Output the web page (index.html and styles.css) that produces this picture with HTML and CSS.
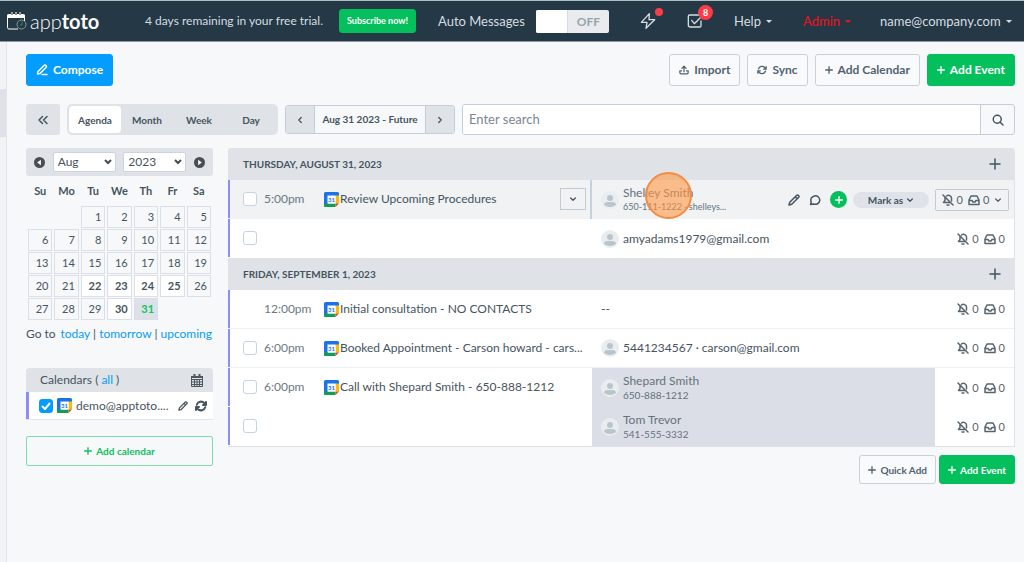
FILE: index.html
```
<!DOCTYPE html>
<html lang="en">
<head>
	<meta charset="UTF-8">
	<meta name="viewport" content="width=device-width, initial-scale=1">
	<title>Apptoto - Agenda</title>
	<link rel="stylesheet" href="styles.css">
</head>
<body>
	<svg class="sprite" width="0" height="0" aria-hidden="true">
		<symbol id="i-pencil" viewBox="0 0 24 24"><path d="M17 3a2.8 2.8 0 0 1 4 4L7.500 20.500 2 22l1.500-5.500zM14.500 5.500l4 4"/></symbol>
		<symbol id="i-edit" viewBox="0 0 24 24"><path d="M12 21h10M16 3a2.800 2.800 0 0 1 4 4L8 19l-5 1 1-5z"/></symbol>
		<symbol id="i-upload" viewBox="0 0 24 24"><path d="M6 14H2v4a3 3 0 0 0 3 3h14a3 3 0 0 0 3-3v-4h-4M12 16V3M7 8l5-5 5 5"/></symbol>
		<symbol id="i-sync" viewBox="0 0 24 24"><path d="M22 4v6h-6M2 20v-6h6M3.500 9.500A9 9 0 0 1 18.500 6L22 10M2 14l3.500 4a9 9 0 0 0 15-3.500"/></symbol>
		<symbol id="i-plus" viewBox="0 0 24 24"><path d="M12 2v20M2 12h20"/></symbol>
		<symbol id="i-down" viewBox="0 0 24 24"><path d="M5 9l7 7 7-7"/></symbol>
		<symbol id="i-left" viewBox="0 0 24 24"><path d="M15 6l-6 6 6 6"/></symbol>
		<symbol id="i-right" viewBox="0 0 24 24"><path d="M9 6l6 6-6 6"/></symbol>
		<symbol id="i-lefts" viewBox="0 0 24 24"><path d="M11 5l-7 7 7 7M20 5l-7 7 7 7"/></symbol>
		<symbol id="i-search" viewBox="0 0 24 24"><circle cx="10.500" cy="10.500" r="8"/><path d="M16 16l6 6"/></symbol>
		<symbol id="i-bolt" viewBox="0 0 24 24"><path d="M14 1L2 14h8.500L9 23l13-13h-8.500z"/></symbol>
		<symbol id="i-check" viewBox="0 0 24 24"><path d="M21 12v7a2 2 0 0 1-2 2H5a3 3 0 0 1-3-3V5a2 2 0 0 1 2-2h15M7 11l4 5L21 6"/></symbol>
		<symbol id="i-chat" viewBox="0 0 24 24"><path d="M3 21l1.500-5A9 8.500 0 1 1 9 20z"/></symbol>
		<symbol id="i-bell" viewBox="0 0 24 24"><path d="M2 2l20 20M6 7v6l-3 4h14M9 4c4-3 10 0 10 4v6M10 22h4"/></symbol>
		<symbol id="i-inbox" viewBox="0 0 24 24"><path d="M2 12l4-8h12l4 8v9H2zM2 13h6l2 3h4l2-3h6"/></symbol>
		<symbol id="i-user" viewBox="0 0 18 18"><circle cx="9" cy="9" r="9" fill="#e9edf0"/><circle cx="9" cy="7" r="3" fill="#b9c5cc"/><path fill="#b9c5cc" d="M3 14q0-3 4-3h4q4 0 4 3-6 4-12 0z"/></symbol>
		<symbol id="i-gcal" viewBox="0 0 15 15">
			<path fill="#1a73e8" d="M1.500 0h12A1.500 1.500 0 0 1 15 1.500V4H4v11H1.500A1.500 1.500 0 0 1 0 13.500v-12A1.500 1.500 0 0 1 1.500 0z"/>
			<path fill="#fbbc04" d="M11.500 3.500H15v8h-3.500z"/>
			<path fill="#0f9d58" d="M3.500 11.500h8V15H1.500A1.500 1.500 0 0 1 0 13.500v-2z"/>
			<path fill="#ea4335" d="M11.500 11.500H15L11.500 15z"/>
			<path fill="#fff" d="M3.500 3.500h8v8h-8z"/>
			<text x="7.500" y="10" text-anchor="middle" font-size="6" font-weight="700" fill="#1a73e8">31</text>
		</symbol>
	</svg>

	<header class="topbar">
		<a class="logo" href="#">
			<svg width="20" height="18" viewBox="0 0 20 18" aria-hidden="true">
				<path d="M.5 6V15.500a1.500 1.500 0 0 0 1.500 1.500h9" fill="none" stroke="#fff"/>
				<path d="M0 6V3.500A1.500 1.500 0 0 1 1.500 2h15A1.500 1.500 0 0 1 18 3.500V6z" fill="#fff"/>
				<path d="M5 1v2M9 1v2M13 1v2" stroke="#243845" stroke-width="2"/>
				<path d="M5 0v3M9 0v3M13 0v3" stroke="#fff"/>
				<path d="M17.500 6v3" stroke="#fff"/>
				<circle cx="14.500" cy="12.500" r="4.500" fill="#243845" stroke="#7fa095"/>
				<path d="M15 9.500v3.500h-2" fill="none" stroke="#2c8a6b"/>
			</svg>
			<span>app<b>toto</b></span>
		</a>
		<span class="trial">4 days remaining in your free trial.</span>
		<button class="btn green subscribe">Subscribe now!</button>
		<label for="auto">Auto Messages</label>
		<span class="switch"><input type="checkbox" id="auto" role="switch"><span>OFF</span></span>
		<a class="notice" href="#" aria-label="Activity"><svg class="icon i15"><use href="#i-bolt"/></svg><i class="dot"></i></a>
		<a class="notice" href="#" aria-label="Tasks"><svg class="icon i15"><use href="#i-check"/></svg><i class="count">8</i></a>
		<a class="menu" href="#">Help</a>
		<a class="menu admin" href="#">Admin</a>
		<a class="menu" href="#">name@company.com</a>
	</header>

	<div class="page">
		<div class="rail"><i></i></div>
		<main>
			<div class="actions">
				<button class="btn blue"><svg class="icon i12"><use href="#i-edit"/></svg>Compose</button>
				<span class="grow"></span>
				<button class="btn"><svg class="icon i10"><use href="#i-upload"/></svg>Import</button>
				<button class="btn"><svg class="icon i10"><use href="#i-sync"/></svg>Sync</button>
				<button class="btn"><svg class="icon i8"><use href="#i-plus"/></svg>Add Calendar</button>
				<button class="btn green"><svg class="icon i8"><use href="#i-plus"/></svg>Add Event</button>
			</div>

			<div class="filters">
				<button class="collapse" aria-label="Collapse"><svg class="icon i12"><use href="#i-lefts"/></svg></button>
				<div class="tabs">
					<button class="active">Agenda</button>
					<button>Month</button>
					<button>Week</button>
					<button>Day</button>
				</div>
				<div class="range">
					<button aria-label="Previous"><svg class="icon i10"><use href="#i-left"/></svg></button>
					<span>Aug 31 2023 - Future</span>
					<button aria-label="Next"><svg class="icon i10"><use href="#i-right"/></svg></button>
				</div>
				<div class="search">
					<input type="text" placeholder="Enter search" aria-label="Enter search">
					<button aria-label="Search"><svg class="icon i12"><use href="#i-search"/></svg></button>
				</div>
			</div>

			<div class="columns">
				<aside>
					<div class="monthnav">
						<button aria-label="Previous month"><svg width="11" height="11" viewBox="0 0 12 12"><circle cx="6" cy="6" r="6" fill="#4a4e54"/><path d="M7.500 3v6L3.500 6z" fill="#fff"/></svg></button>
						<select aria-label="Month"><option>Aug</option></select>
						<select aria-label="Year"><option>2023</option></select>
						<button aria-label="Next month"><svg width="11" height="11" viewBox="0 0 12 12"><circle cx="6" cy="6" r="6" fill="#4a4e54"/><path d="M4.500 3v6l4-3z" fill="#fff"/></svg></button>
					</div>
					<table class="month">
						<thead>
							<tr><th>Su</th><th>Mo</th><th>Tu</th><th>We</th><th>Th</th><th>Fr</th><th>Sa</th></tr>
						</thead>
						<tbody>
							<tr><td class="none"></td><td class="none"></td><td>1</td><td>2</td><td>3</td><td>4</td><td>5</td></tr>
							<tr><td>6</td><td>7</td><td>8</td><td>9</td><td>10</td><td>11</td><td>12</td></tr>
							<tr><td>13</td><td>14</td><td>15</td><td>16</td><td>17</td><td>18</td><td>19</td></tr>
							<tr><td>20</td><td>21</td><td class="busy">22</td><td class="busy">23</td><td class="busy">24</td><td class="busy">25</td><td>26</td></tr>
							<tr><td>27</td><td>28</td><td>29</td><td class="busy">30</td><td class="today">31</td><td class="none"></td><td class="none"></td></tr>
						</tbody>
					</table>
					<p class="goto">Go to <span><a href="#">today</a> | <a href="#">tomorrow</a> | <a href="#">upcoming</a></span></p>

					<section class="calendars">
						<h2><span>Calendars ( <a href="#">all</a> )</span>
							<svg width="12" height="13" viewBox="0 0 12 13" aria-hidden="true"><path fill="none" stroke="#4c5860" d="M.5 2.500h11v10H.5zM.5 5.500h11M.5 8h11M.5 10.500h11M3.500 5v7M6 5v7M8.500 5v7"/><path stroke="#4c5860" stroke-width="2" d="M3.500 0v3M8.500 0v3M0 3h12"/></svg>
						</h2>
						<div class="calendar">
							<input type="checkbox" id="demo" checked>
							<svg class="gcal"><use href="#i-gcal"/></svg>
							<label for="demo">demo@apptoto....</label>
							<button aria-label="Edit"><svg class="icon i10"><use href="#i-pencil"/></svg></button>
							<button aria-label="Refresh"><svg class="icon i12 bold"><use href="#i-sync"/></svg></button>
						</div>
					</section>
					<button class="addcal"><svg class="icon i8"><use href="#i-plus"/></svg>Add calendar</button>
				</aside>

				<section class="agenda">
					<div class="list">
						<h2>Thursday, August 31, 2023 <button aria-label="Add event"><svg class="icon i12"><use href="#i-plus"/></svg></button></h2>
						<div class="row hover">
							<div class="event">
								<input type="checkbox" aria-label="Select Shelley Smith">
								<time>5:00pm</time>
								<svg class="gcal"><use href="#i-gcal"/></svg>
								<span class="title">Review Upcoming Procedures</span>
								<button class="more" aria-label="Event menu"><svg class="icon i8"><use href="#i-down"/></svg></button>
							</div>
							<div class="contact">
								<svg class="avatar"><use href="#i-user"/></svg>
								<div class="person">Shelley Smith<small>650-111-1222 · shelleys...</small></div>
								<div class="tools">
									<button aria-label="Edit contact"><svg class="icon i12"><use href="#i-pencil"/></svg></button>
									<button aria-label="Message"><svg class="icon i12"><use href="#i-chat"/></svg></button>
									<button class="round" aria-label="Add"><svg class="icon i8"><use href="#i-plus"/></svg></button>
									<button class="mark">Mark as <svg class="icon i8"><use href="#i-down"/></svg></button>
								</div>
								<i class="pointer"></i>
							</div>
							<button class="status boxed"><svg class="icon i12"><use href="#i-bell"/></svg>0 <svg class="icon i12"><use href="#i-inbox"/></svg>0 <svg class="icon i8"><use href="#i-down"/></svg></button>
						</div>
						<div class="row">
							<div class="event"><input type="checkbox" aria-label="Select amyadams1979@gmail.com"></div>
							<div class="contact"><svg class="avatar"><use href="#i-user"/></svg><div class="single">amyadams1979@gmail.com</div></div>
							<div class="status"><svg class="icon i12"><use href="#i-bell"/></svg>0 <svg class="icon i12"><use href="#i-inbox"/></svg>0</div>
						</div>

						<h2>Friday, September 1, 2023 <button aria-label="Add event"><svg class="icon i12"><use href="#i-plus"/></svg></button></h2>
						<div class="row lined">
							<div class="event nocheck">
								<time>12:00pm</time>
								<svg class="gcal"><use href="#i-gcal"/></svg>
								<span class="title">Initial consultation - NO CONTACTS</span>
							</div>
							<div class="contact">--</div>
							<div class="status"><svg class="icon i12"><use href="#i-bell"/></svg>0 <svg class="icon i12"><use href="#i-inbox"/></svg>0</div>
						</div>
						<div class="row lined">
							<div class="event">
								<input type="checkbox" aria-label="Select 5441234567">
								<time>6:00pm</time>
								<svg class="gcal"><use href="#i-gcal"/></svg>
								<span class="title">Booked Appointment - Carson howard - cars...</span>
							</div>
							<div class="contact"><svg class="avatar"><use href="#i-user"/></svg><div class="single">5441234567 · carson@gmail.com</div></div>
							<div class="status"><svg class="icon i12"><use href="#i-bell"/></svg>0 <svg class="icon i12"><use href="#i-inbox"/></svg>0</div>
						</div>
						<div class="row">
							<div class="event">
								<input type="checkbox" aria-label="Select Shepard Smith">
								<time>6:00pm</time>
								<svg class="gcal"><use href="#i-gcal"/></svg>
								<span class="title">Call with Shepard Smith - 650-888-1212</span>
							</div>
							<div class="contact shaded"><svg class="avatar"><use href="#i-user"/></svg><div class="person">Shepard Smith<small>650-888-1212</small></div></div>
							<div class="status"><svg class="icon i12"><use href="#i-bell"/></svg>0 <svg class="icon i12"><use href="#i-inbox"/></svg>0</div>
						</div>
						<div class="row">
							<div class="event"><input type="checkbox" aria-label="Select Tom Trevor"></div>
							<div class="contact shaded"><svg class="avatar"><use href="#i-user"/></svg><div class="person">Tom Trevor<small>541-555-3332</small></div></div>
							<div class="status"><svg class="icon i12"><use href="#i-bell"/></svg>0 <svg class="icon i12"><use href="#i-inbox"/></svg>0</div>
						</div>
					</div>
					<div class="bottom">
						<button class="btn small"><svg class="icon i8"><use href="#i-plus"/></svg>Quick Add</button>
						<button class="btn small green"><svg class="icon i8"><use href="#i-plus"/></svg>Add Event</button>
					</div>
				</section>
			</div>
		</main>
	</div>
</body>
</html>
```
FILE: styles.css
```
*{
	box-sizing: border-box;
}
body{
	margin: 0;
	min-height: 100vh;
	display: flex;
	flex-direction: column;
	background: #f6f8fa;
	color: #46545e;
	font: 12px/16px Lato, "Open Sans", sans-serif;
}
button, input, select{
	font: inherit;
	color: inherit;
	margin: 0;
	padding: 0;
}
button{
	border: 0;
	background: none;
	display: flex;
	align-items: center;
	justify-content: center;
	white-space: nowrap;
	cursor: pointer;
}
a{
	color: #0a9bf5;
	text-decoration: none;
}
.sprite{
	display: none;
}

/* icons */
.icon{
	flex: none;
	fill: none;
	stroke: currentColor;
	stroke-width: 2;
	stroke-linecap: round;
	stroke-linejoin: round;
}
.i8{
	width: 8px;
	height: 8px;
	stroke-width: 4;
}
.i10{
	width: 10px;
	height: 10px;
	stroke-width: 3;
}
.i12{
	width: 12px;
	height: 12px;
	stroke-width: 3;
}
.i15{
	width: 16px;
	height: 16px;
}
.bold{
	stroke-width: 4;
}
.gcal{
	flex: none;
	width: 15px;
	height: 15px;
}
.avatar{
	flex: none;
	width: 18px;
	height: 18px;
}

/* top bar */
.topbar{
	display: grid;
	grid-template-columns: 138px 194px 99px 98px 104px 47px 47px 69px 77px 1fr;
	align-items: center;
	justify-items: start;
	height: 42px;
	padding-left: 7px;
	border-top: 1px solid #a9bfc2;
	border-bottom: 1px solid #8b99a2;
	background: #243845;
	color: #d5dde2;
	white-space: nowrap;
}
.topbar > label, .menu{
	font-size: 13px;
}
.logo{
	display: flex;
	align-items: center;
	gap: 3px;
	color: #fff;
	font-size: 20px;
	font-weight: 300;
	line-height: 24px;
}
.logo b{
	font-weight: 700;
}
.topbar .subscribe{
	height: 24px;
	padding: 0 7px;
	font-size: 9px;
}
.switch{
	display: flex;
	width: 73px;
	height: 23px;
	border-radius: 2px;
	background: #e9ebee;
	overflow: hidden;
}
.switch input{
	appearance: none;
	width: 32px;
	background: #fff;
	border-right: 1px solid #cfdaea;
}
.switch span{
	flex: 1;
	text-align: center;
	line-height: 23px;
	font-weight: 700;
	color: #97a3ab;
}
.notice{
	position: relative;
	display: flex;
	color: #d5dde2;
}
.dot, .count{
	position: absolute;
	border-radius: 50%;
	background: #fd3b46;
}
.dot{
	right: -7px;
	top: -5px;
	width: 8px;
	height: 8px;
}
.count{
	left: 11px;
	top: -8px;
	width: 15px;
	height: 15px;
	color: #fff;
	font: 700 9px/15px Lato, sans-serif;
	text-align: center;
}
.menu{
	display: flex;
	align-items: center;
	gap: 5px;
	color: #d5dde2;
}
.menu::after{
	content: "";
	border: 3px solid transparent;
	border-top-color: currentColor;
	border-bottom: 0;
}
.menu.admin{
	color: #f5101c;
}

/* page */
.page{
	flex: 1;
	display: flex;
}
.rail{
	width: 7px;
	padding-top: 47px;
	border-right: 1px solid #e1e5e9;
	background: #f2f3f5;
}
.rail i{
	display: block;
	height: 48px;
	background: #dee2e8;
}
main{
	flex: 1;
	min-width: 0;
	padding: 12px 9px 12px 19px;
}
.grow{
	flex: 1;
}
.actions{
	display: flex;
	gap: 7px;
	margin-bottom: 18px;
}
.btn{
	height: 32px;
	gap: 5px;
	padding: 0 9px;
	border: 1px solid #c9d0d7;
	border-radius: 3px;
	background: #f9fafc;
	color: #506370;
	font-weight: 700;
}
.btn.blue{
	border-color: #049dfe;
	background: #049dfe;
	color: #fff;
}
.btn.green{
	border-color: #04c05c;
	background: #04c05c;
	color: #fff;
}
.btn.small{
	height: 29px;
	padding: 0 8px;
	gap: 4px;
	font-size: 10px;
}

/* filters */
.filters{
	display: flex;
	gap: 7px;
	height: 31px;
	margin-bottom: 13px;
	font-size: 10px;
	font-weight: 700;
}
.collapse{
	width: 34px;
	border-radius: 3px;
	background: #dfe3e8;
}
.tabs{
	display: grid;
	grid-template-columns: repeat(4, 52px);
	padding: 2px 1px 2px 2px;
	border-radius: 5px;
	background: #dfe3e8;
}
.tabs .active{
	border-radius: 4px;
	background: #fff;
}
.range{
	display: flex;
	width: 170px;
	height: 29px;
	margin-top: 1px;
	border: 1px solid #c3cedb;
	border-radius: 3px;
	overflow: hidden;
}
.range button{
	width: 28px;
	background: #dfe3e8;
}
.range span{
	flex: 1;
	border: solid #c3cedb;
	border-width: 0 1px;
	line-height: 27px;
	text-align: center;
}
.search{
	flex: 1;
	display: flex;
	border: 1px solid #c3cedb;
	border-radius: 3px;
	overflow: hidden;
}
.search input{
	flex: 1;
	min-width: 0;
	padding: 0 6px 2px;
	border: 0;
	border-right: 1px solid #c3cedb;
	background: #fff;
	font-size: 13px;
	font-weight: 400;
}
.search input::placeholder{
	color: #7b8791;
}
.search button{
	width: 33px;
}

/* sidebar */
.columns{
	display: grid;
	grid-template-columns: 187px minmax(0, 1fr);
	gap: 15px;
	align-items: start;
}
.monthnav{
	display: flex;
	align-items: center;
	justify-content: space-between;
	height: 28px;
	padding: 0 8px;
	border-radius: 3px;
	background: #dfe3e8;
}
.monthnav select{
	appearance: none;
	width: 63px;
	height: 20px;
	padding-left: 4px;
	border: 1px solid #c9d3e2;
	border-radius: 2px;
	background: #fff url("data:image/svg+xml,%3Csvg xmlns='http://www.w3.org/2000/svg' width='8' height='6'%3E%3Cpath d='M1 1l3 3 3-3' fill='none' stroke='%23444c54' stroke-width='2'/%3E%3C/svg%3E") no-repeat right 3px center;
}
.month{
	width: 100%;
	margin-top: 4px;
	table-layout: fixed;
	border-spacing: 2px 1px;
	font-size: 11px;
	line-height: 20px;
}
.month th, .month td{
	padding: 0;
}
.month th{
	height: 24px;
	vertical-align: top;
}
.month td{
	height: 22px;
	padding-right: 3px;
	border: 1px solid #dcdfe8;
	text-align: right;
}
.month .none{
	border-color: transparent;
}
.month .busy{
	background: #fff;
	font-weight: 700;
}
.month .today{
	background: #dce0e8;
	color: #10c464;
	font-weight: 700;
}
.goto{
	display: flex;
	justify-content: space-between;
	margin: 5px 1px 26px 0;
	white-space: nowrap;
}
.calendars{
	border-bottom: 1px solid #e1e5e9;
	background: #fff;
}
.calendars h2{
	display: flex;
	align-items: center;
	justify-content: space-between;
	height: 24px;
	margin: 0;
	padding: 0 10px 0 14px;
	border-radius: 3px 3px 0 0;
	background: #dfe3e8;
	font-size: 12px;
	font-weight: 400;
}
.calendar{
	display: flex;
	align-items: center;
	gap: 4px;
	height: 27px;
	padding: 0 6px 0 10px;
	border-left: 3px solid #8c8cfa;
}
.calendar label{
	flex: 1;
	white-space: nowrap;
}
.calendar button{
	margin-left: 3px;
}
input[type=checkbox]:not(.switch input){
	appearance: none;
	flex: none;
	width: 14px;
	height: 14px;
	border: 1px solid #c6d3e4;
	border-radius: 3px;
	background: #fff;
}
.calendar input[type=checkbox]:checked:not(.switch input){
	border-color: #049dfe;
	background: #049dfe url("data:image/svg+xml,%3Csvg xmlns='http://www.w3.org/2000/svg' width='10' height='8'%3E%3Cpath d='M1 4l3 3 5-6' fill='none' stroke='white' stroke-width='2'/%3E%3C/svg%3E") no-repeat center;
}
.addcal{
	width: 100%;
	height: 30px;
	margin-top: 16px;
	gap: 4px;
	border: 1px solid #7fddab;
	border-radius: 2px;
	color: #10bd62;
	font-size: 10px;
	font-weight: 700;
}

/* agenda */
.list{
	border: solid #dfe3e8;
	border-width: 0 1px 1px 0;
	border-radius: 3px 3px 0 0;
	background: #fff;
	overflow: hidden;
}
.list h2{
	display: flex;
	align-items: center;
	justify-content: space-between;
	height: 32px;
	margin: 0;
	padding: 0 13px 0 15px;
	background: #dfe3e8;
	font-size: 10px;
	font-weight: 700;
	text-transform: uppercase;
}
.row{
	display: grid;
	grid-template-columns: minmax(0, 364fr) minmax(0, 343fr) 79px;
	height: 39px;
}
.row.lined{
	border-bottom: 1px solid #eef0f2;
}
.row.hover{
	background: #f0f2f4;
}
.event{
	display: flex;
	align-items: center;
	margin-bottom: 1px;
	padding-left: 13px;
	border-left: 2px solid #8c8cfa;
}
.lined .event{
	margin-bottom: 0;
}
.event time{
	width: 60px;
	margin-left: 7px;
	color: #6d7982;
}
.event.nocheck{
	padding-left: 27px;
}
.event .title{
	flex: 1;
	overflow: hidden;
	white-space: nowrap;
	text-overflow: ellipsis;
	margin-left: 1px;
}
.more{
	width: 26px;
	height: 22px;
	margin-right: 6px;
	border: 1px solid #c3cad1;
}
.contact{
	position: relative;
	display: flex;
	align-items: center;
	gap: 4px;
	padding-left: 9px;
	white-space: nowrap;
}
.hover .contact{
	margin-left: -2px;
	border-left: 2px solid #c5d0e2;
}
.shaded{
	background: #dcdee7;
}
.person{
	line-height: 15px;
	color: #65727b;
}
.person small{
	display: block;
	font-size: 9px;
	line-height: 14px;
}
.shaded .person small{
	font-size: 10px;
}
.tools{
	display: flex;
	align-items: center;
	gap: 6px;
	margin-left: auto;
	padding-right: 6px;
}
.tools .i12{
	margin-right: 3px;
}
.round{
	width: 17px;
	height: 17px;
	border-radius: 50%;
	background: #04c05c;
	color: #fff;
}
.mark{
	gap: 3px;
	width: 76px;
	height: 16px;
	border-radius: 8px;
	background: #dfe3e9;
	font-size: 10px;
	font-weight: 700;
}
.pointer{
	position: absolute;
	left: 53px;
	top: -8px;
	width: 47px;
	height: 47px;
	border: 2px solid #f58a42;
	border-radius: 50%;
	background: rgba(255, 151, 66, .6);
}
.status{
	display: flex;
	align-items: center;
	justify-content: flex-end;
	gap: 3px;
	padding-right: 9px;
	color: #56646e;
	font-size: 11px;
}
.status .icon ~ .icon{
	margin-left: 2px;
}
.status.boxed{
	justify-content: center;
	align-self: center;
	height: 22px;
	margin-right: 5px;
	padding: 0;
	border: 1px solid #c3cad1;
	border-radius: 2px;
}
.bottom{
	display: flex;
	justify-content: flex-end;
	gap: 3px;
	margin-top: 8px;
}
```
